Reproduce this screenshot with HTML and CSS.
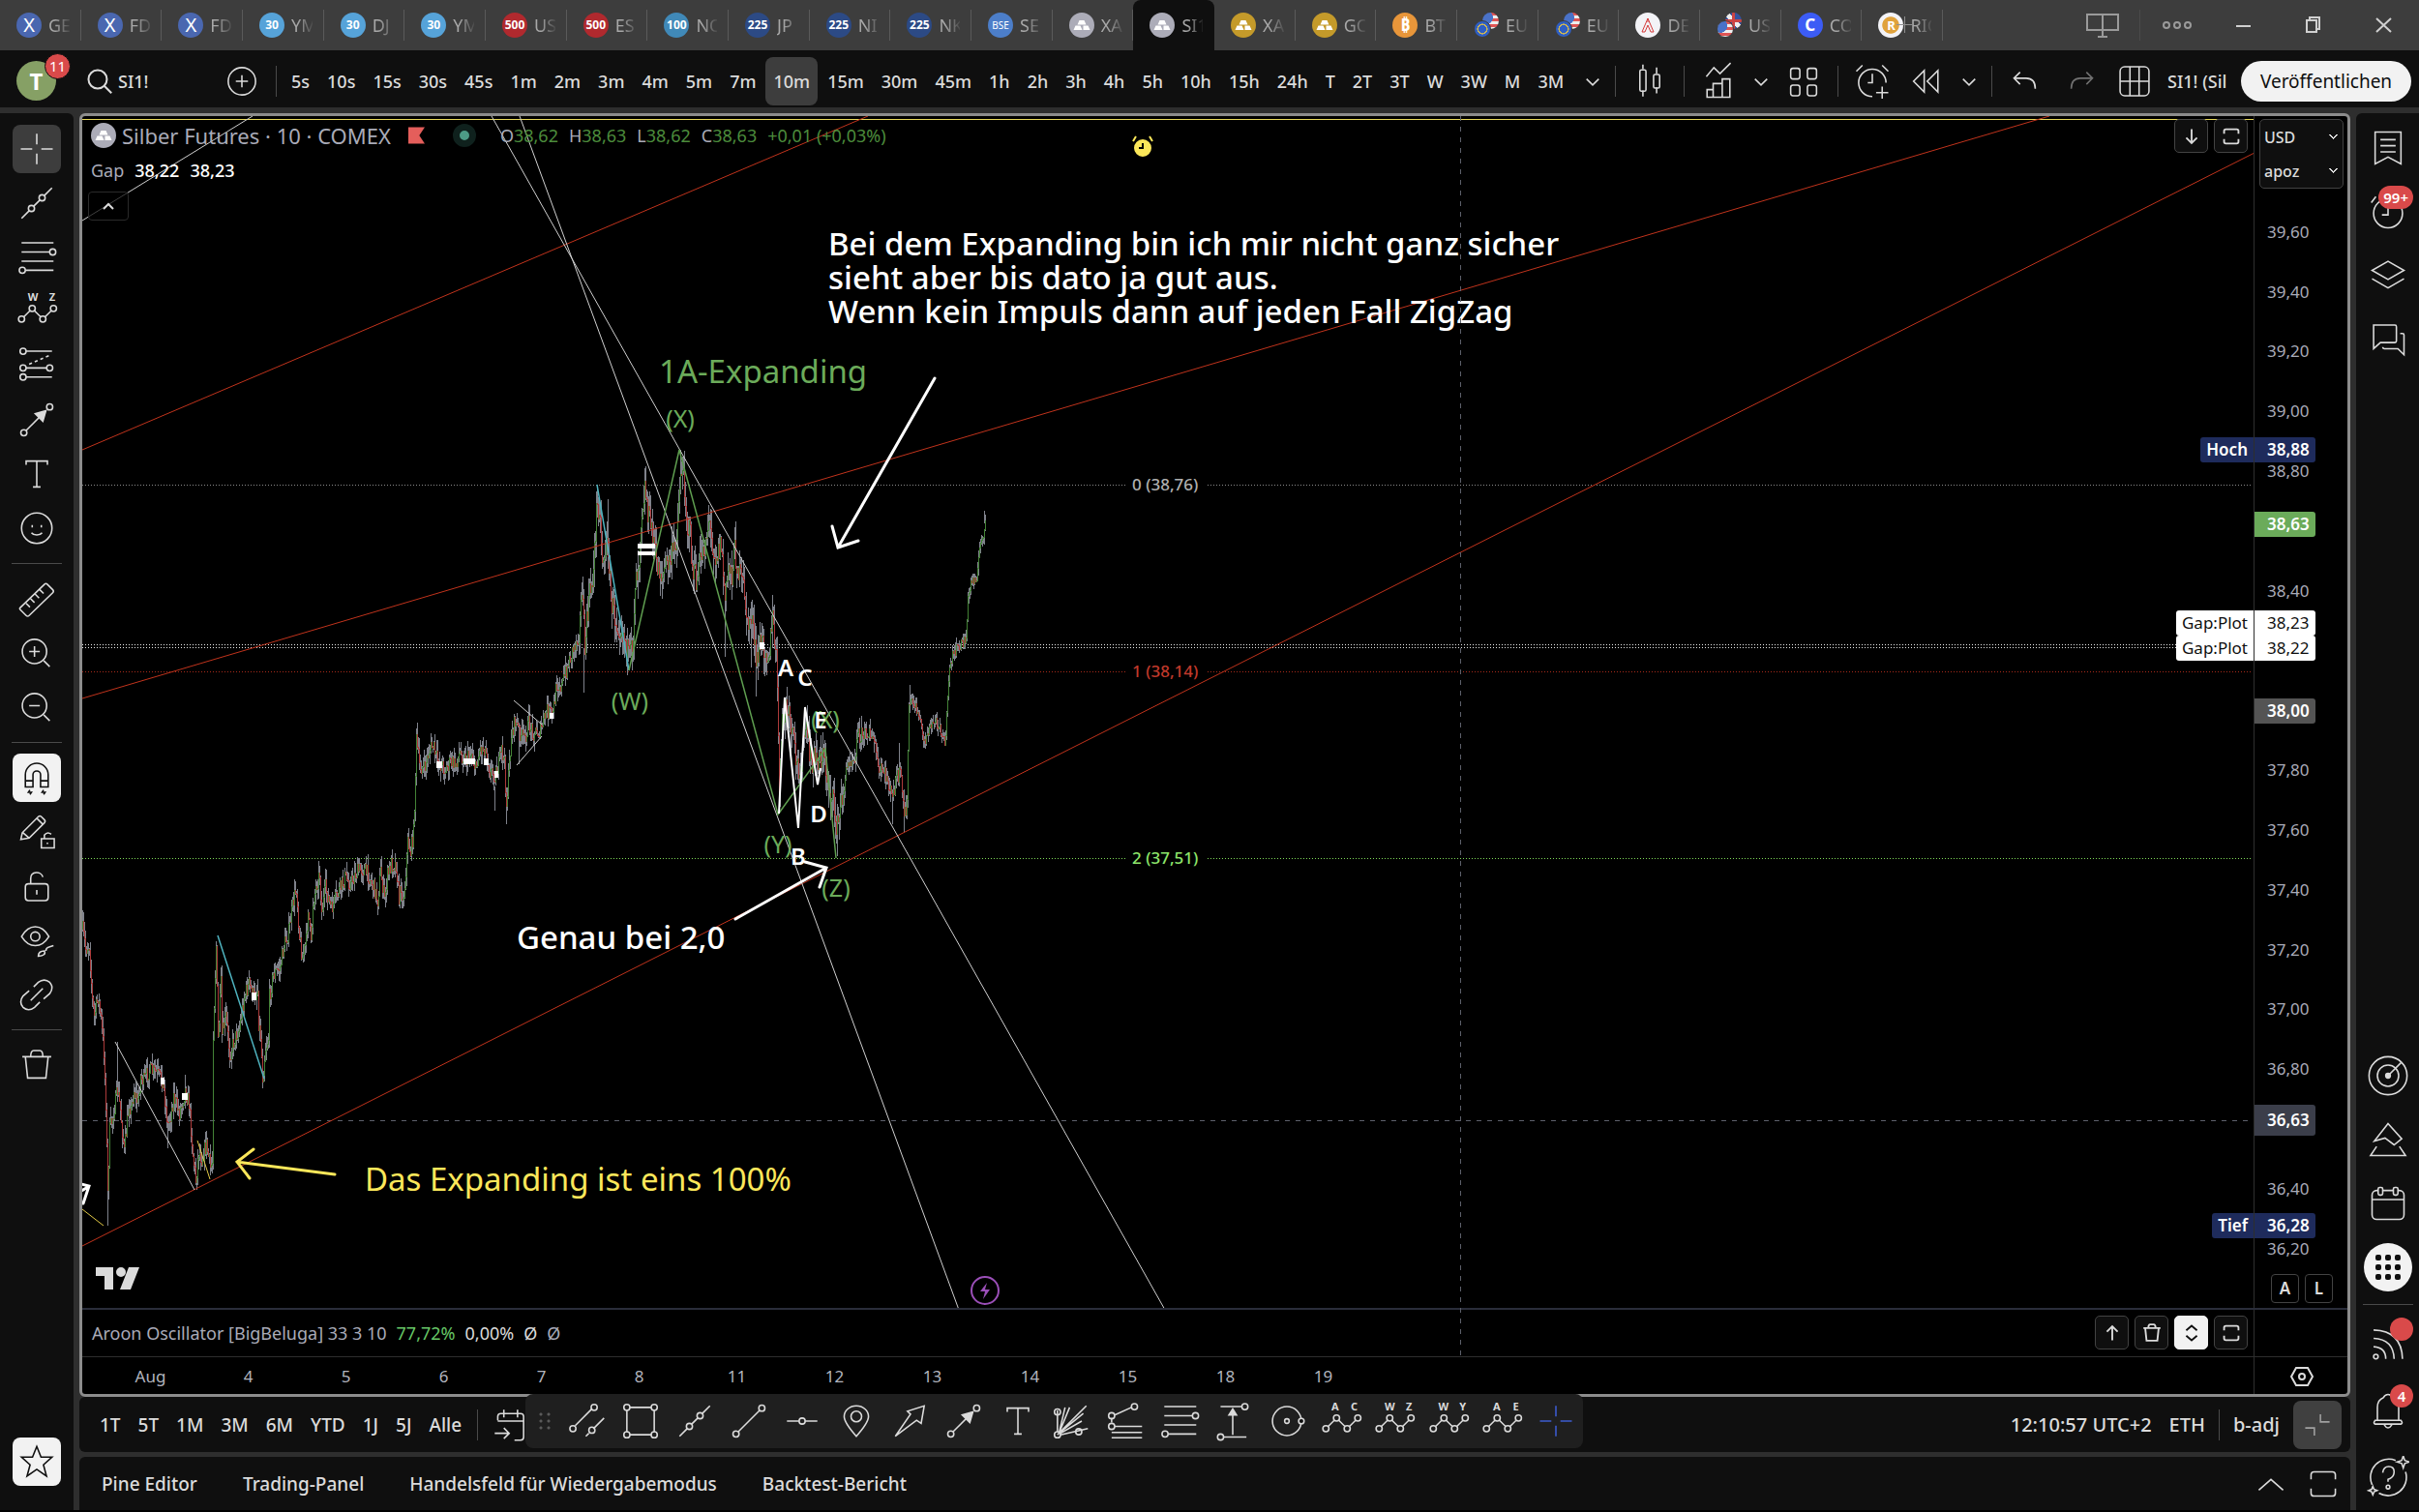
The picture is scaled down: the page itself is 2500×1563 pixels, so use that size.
FILE: index.html
```html
<!DOCTYPE html>
<html lang="de">

<head>
	<meta charset="utf-8">
	<title>SI1! Silber Futures</title>
	<link rel="stylesheet" href="styles.css">
</head>

<body>
	<!-- Icon sprite, 28 unit grid -->
	<svg class="sprite">
		<symbol id="i-cross" viewBox="0 0 28 28"><path d="M14 4v7M14 17v7M3.500 14h7.500M17 14h7.500" /></symbol>
		<symbol id="i-trend" viewBox="0 0 28 28"><path d="M4 24l5-5M12 16l4-4M19 9l5-5" /><circle cx="10.500" cy="17.500" r="2" /><circle cx="17.500" cy="10.500" r="2" /></symbol>
		<symbol id="i-fib" viewBox="0 0 28 28"><path d="M4 4.500h21M4 10.500h18.500M4 16.500h21M6.500 22.500H25" /><circle cx="24.500" cy="10.500" r="2" /><circle cx="4.500" cy="22.500" r="2" /></symbol>
		<symbol id="i-wave" viewBox="0 0 28 28"><path d="M5.500 17.500l4-4M12.500 13.500l4 4M19.500 17.500l4-4" /><circle cx="4" cy="19" r="2" /><circle cx="11" cy="12" r="2" /><circle cx="18" cy="19" r="2" /><circle cx="25" cy="12" r="2" /></symbol>
		<symbol id="i-pos" viewBox="0 0 28 28"><path d="M7 4.500h17M7 15.500h13.500M7 21.500h17" /><path d="M9 13l14-6" stroke-dasharray="2 2" /><circle cx="5" cy="4.500" r="2" /><circle cx="5" cy="15.500" r="2" /><circle cx="22.500" cy="15.500" r="2" /><circle cx="5" cy="21.500" r="2" /></symbol>
		<symbol id="i-arrow" viewBox="0 0 28 28"><path d="M7 21L20 8" /><path class="solid" d="M20 8l-7 2 5 5z" /><circle cx="5.500" cy="22.500" r="2" /><circle cx="22.500" cy="5.500" r="2" /></symbol>
		<symbol id="i-text" viewBox="0 0 28 28"><path d="M7 8V5.500h14V8M14 5.500v17M11.500 22.500h5" /></symbol>
		<symbol id="i-smile" viewBox="0 0 28 28"><circle cx="14" cy="14" r="10" /><path d="M10.500 17c1.500 2 5.500 2 7 0M11 12v1.500M17 12v1.500" /></symbol>
		<symbol id="i-ruler" viewBox="0 0 28 28"><path d="M3 20L19 4.500q1-1 2 0l3.500 3.500q1 1 0 2L9 25q-1 1-2 0l-4-4q-.5-.5 0-1zM7 17l2.500 2.500M10 14l2.500 2.500M13 11l2.500 2.500M16 8l2.500 2.500" /></symbol>
		<symbol id="i-zoomin" viewBox="0 0 28 28"><circle cx="12.500" cy="13" r="8" /><path d="M18.500 19l4 4M12.500 9.500v7M9 13h7" /></symbol>
		<symbol id="i-zoomout" viewBox="0 0 28 28"><circle cx="12.500" cy="13" r="8" /><path d="M18.500 19l4 4M9 13h7" /></symbol>
		<symbol id="i-magnet" viewBox="0 0 28 28"><path d="M6.500 20V12a7.500 7.500 0 0 1 15 0v8h-5V12a2.500 2.500 0 0 0-5 0v8zM6.500 16h5M16.500 16h5M9.500 22l-1 1.500h2l-1 1.500M18.500 22l-1 1.500h2l-1 1.500" /></symbol>
		<symbol id="i-pencil" viewBox="0 0 28 28"><path d="M3.500 19l1-4.500L15 4q1-1 2 0l2 2q1 1 0 2L9 18zM5 14.500L9 18M14 5l4 4M17 18.500h8.500v6H17zM19 18.500V16q2-2.500 4.500-.5M21 21v1" /></symbol>
		<symbol id="i-lock" viewBox="0 0 28 28"><rect x="6.500" y="12.500" width="15" height="11" rx="2" /><path d="M10 12.500V9c0-5 7-5 8-1M14 16.500v3" /></symbol>
		<symbol id="i-eye" viewBox="0 0 28 28"><path d="M4 11.500c5-8.500 13-8.500 18 0-5 8-13 8-18 0z" /><circle cx="13" cy="11.500" r="3" /><path d="M15 24.500q0-3.500 4-3.500 1.500 3-4 3.500zM20 21q0-2 2-2.500l3-1" /></symbol>
		<symbol id="i-link" viewBox="0 0 28 28"><path d="M12 9l3-3q4-3 7.500 0 3 3.500 0 7.500l-4 3.500M16 19l-3.500 3.500q-4 3-7.500 0-3-3.500 0-7.500L9 11.500M10 18l8-8" /></symbol>
		<symbol id="i-trash" viewBox="0 0 28 28"><path d="M4.500 8.500h19M6.500 8.500l1.500 14h12l1.500-14M10 8.500q0-4 2-4h4q2 0 2 4" /></symbol>
		<symbol id="i-star" viewBox="0 0 28 28"><path d="M14 4l2.800 7h7.200l-5.600 5 2 7.500-6.400-4.500-6.400 4.500 2-7.500-5.600-5h7.200z" /></symbol>
		<symbol id="i-search" viewBox="0 0 28 28"><circle cx="12.500" cy="12.500" r="7" /><path d="M17.500 17.500l5.500 5.500" /></symbol>
		<symbol id="i-plus" viewBox="0 0 28 28"><circle cx="14" cy="14" r="9" /><path d="M14 10v8M10 14h8" /></symbol>
		<symbol id="i-down" viewBox="0 0 28 28"><path d="M10 12.500l4 4 4-4" /></symbol>
		<symbol id="i-candles" viewBox="0 0 28 28"><path d="M9.500 3v3M9.500 20v4M18.500 5v4M18.500 18v4" /><rect x="7.500" y="6.500" width="4" height="14" rx="1" /><rect x="16.500" y="9.500" width="4" height="9" rx="1" /></symbol>
		<symbol id="i-indicator" viewBox="0 0 28 28"><path d="M6 11l5-6 4 4 7-7M6.500 24.500v-5h4v5zM10.500 24.500v-9h6v9zM16.500 24.500v-12h5v12zM6 24.500h16" /></symbol>
		<symbol id="i-grid" viewBox="0 0 28 28"><rect x="5.500" y="5.500" width="6" height="7" rx="1.500" /><rect x="16.500" y="5.500" width="6" height="7" rx="1.500" /><rect x="5.500" y="16.500" width="6" height="7" rx="1.500" /><rect x="16.500" y="16.500" width="6" height="7" rx="1.500" /></symbol>
		<symbol id="i-alarm" viewBox="0 0 28 28"><path d="M23 15a9 9 0 1 0-9 9M14 9v6h-3M3.500 7.500l4-4M24.500 7.500l-4-4M20.500 17.500v8M16.500 21.500h8" /></symbol>
		<symbol id="i-rewind" viewBox="0 0 28 28"><path d="M12.500 7v14L5.500 14zM21.500 7v14L14.500 14z" /></symbol>
		<symbol id="i-undo" viewBox="0 0 28 28"><path d="M10 8l-4 4 4 4M6 12h8q6 0 6 7" /></symbol>
		<symbol id="i-redo" viewBox="0 0 28 28"><path d="M18 8l4 4-4 4M22 12h-8q-6 0-6 7" /></symbol>
		<symbol id="i-layout" viewBox="0 0 28 28"><rect x="4.500" y="4.500" width="19" height="19" rx="3" /><path d="M11 4.500v19M17 4.500v19M4.500 14h19" /></symbol>
		<symbol id="i-max" viewBox="0 0 28 28"><path d="M6 11V8q0-2 2-2h12q2 0 2 2v3M6 17v3q0 2 2 2h12q2 0 2-2v-3" /></symbol>
		<symbol id="i-arrdown" viewBox="0 0 28 28"><path d="M14 6v15M8 15.500l6 6 6-6" /></symbol>
		<symbol id="i-arrup" viewBox="0 0 28 28"><path d="M14 22V7M8 12.500l6-6 6 6" /></symbol>
		<symbol id="i-updown" viewBox="0 0 28 28"><path d="M8 11l6-5 6 5M8 17l6 5 6-5" /></symbol>
		<symbol id="i-up" viewBox="0 0 28 28"><path d="M6 18l8-7 8 7" /></symbol>
		<symbol id="i-list" viewBox="0 0 28 28"><path d="M5.500 3.500h17v21L14 20l-8.500 4.500zM9 8.500h10M9 12.500h10M9 16.500h10" /></symbol>
		<symbol id="i-clock" viewBox="0 0 28 28"><circle cx="14" cy="15" r="9.500" /><path d="M14 11v5h-4M3 8l3-4" /></symbol>
		<symbol id="i-layers" viewBox="0 0 28 28"><path d="M14 4.500l10.500 6L14 16.500l-10.500-6zM3.500 16L14 22l10.500-6" /></symbol>
		<symbol id="i-chat" viewBox="0 0 28 28"><path d="M4.500 4.500h14q1 0 1 1V15q0 1-1 1H9l-4.500 4zM22 10h1.500q1 0 1 1v13l-4-4h-9q-1 0-1-1" /></symbol>
		<symbol id="i-radar" viewBox="0 0 28 28"><circle cx="14" cy="14" r="12.500" /><circle cx="14" cy="14" r="7" /><circle class="solid" cx="14" cy="14" r="1.500" /><path d="M14 14l8.500-8.500" /></symbol>
		<symbol id="i-pyramid" viewBox="0 0 28 28"><path d="M14 3.500l9 10-5 4-6-4.500-7 2zM6.500 18.500L2.500 24.500h23l-4-6" /></symbol>
		<symbol id="i-calendar" viewBox="0 0 28 28"><rect x="3.500" y="5.500" width="21" height="19" rx="3" /><path d="M3.500 11.500h21" /><rect class="cut" x="7.500" y="3.500" width="3" height="5" rx="1" /><rect class="cut" x="17.500" y="3.500" width="3" height="5" rx="1" /></symbol>
		<symbol id="i-feed" viewBox="0 0 28 28"><circle cx="6" cy="22.500" r="1.500" /><path d="M4.500 16q8 .5 8 8M4.500 10.500q13 .5 13.500 13.500M4.500 5Q23 5.500 23.500 24" /></symbol>
		<symbol id="i-bell" viewBox="0 0 28 28"><path d="M7 20V12q0-5 4-6.500 1-2 3-2t3 2q4 1.500 4 6.500v8M5.500 20.500h17q1.500 2 0 2.500h-17q-1.500-.5 0-2.500zM11.500 23.500q2.500 4 5 0" /></symbol>
		<symbol id="i-help" viewBox="0 0 28 28"><path d="M19 3A12 12 0 0 0 3.500 19M8 24.500A12 12 0 0 0 25.500 10.500M10.500 11q.5-4 4-4t3.500 3.500-4 5v1.500M24 0l1 3 3 1-3 1-1 3-1-3-3-1 3-1zM4 20l.8 2 2 .8-2 .8-.8 2-.8-2-2-.8 2-.8z" /><circle cx="14" cy="20.500" r="1.200" /></symbol>
		<symbol id="i-goto" viewBox="0 0 28 28"><path d="M6 11V8.500q0-2 2-2h13q2 0 2 2V22q0 2-2 2h-4M6 11.500h17M10 4v5M19 4v5M4 19.500h9M10 16l3.500 3.500L10 23" /></symbol>
		<symbol id="i-channel" viewBox="0 0 28 28"><path d="M6 17L17 6M13 24l2-2M18 19l7-7" /><circle cx="4.500" cy="19" r="2" /><circle cx="18.500" cy="5" r="2" /><circle cx="17" cy="20" r="2" /></symbol>
		<symbol id="i-rect" viewBox="0 0 28 28"><path d="M7 5h14M7 23h14M5 7v14M23 7v14" /><circle cx="5" cy="5" r="2" /><circle cx="23" cy="5" r="2" /><circle cx="5" cy="23" r="2" /><circle cx="23" cy="23" r="2" /></symbol>
		<symbol id="i-line" viewBox="0 0 28 28"><path d="M7 21L21 7" /><circle cx="5.500" cy="22.500" r="2" /><circle cx="22.500" cy="5.500" r="2" /></symbol>
		<symbol id="i-hline" viewBox="0 0 28 28"><path d="M4 14h8M16 14h8" /><circle cx="14" cy="14" r="2" /></symbol>
		<symbol id="i-pin" viewBox="0 0 28 28"><path d="M14 24Q6 15 6 11a8 7 0 0 1 16 0q0 4-8 13z" /><circle cx="14" cy="11" r="3.500" /></symbol>
		<symbol id="i-bigarrow" viewBox="0 0 28 28"><path d="M4 24L14 9.500l-2-2L23 4l-2 11.500-3-2z" /></symbol>
		<symbol id="i-fan" viewBox="0 0 28 28"><path d="M5 23L24 4M5 21V7M6 22l7-17M6 22l4-17M7 22l14-8M7 23l18-4M6 22L22 9" /><circle cx="5" cy="23" r="2" /><circle cx="5" cy="8" r="2" /><circle cx="19" cy="21" r="2" /></symbol>
		<symbol id="i-fibext" viewBox="0 0 28 28"><path d="M7 10l11-5M5 12v3M7 17.500h18M5 21.500h20M5 25h20" /><circle cx="20" cy="4.500" r="2" /><circle cx="5" cy="10.500" r="2" /><circle cx="5" cy="17.500" r="2" /></symbol>
		<symbol id="i-range" viewBox="0 0 28 28"><path d="M6 4.500h14M8 24.500h15M14 23V8" /><path class="solid" d="M14 6l2.500 4h-5z" /><circle cx="22" cy="4.500" r="2" /><circle cx="6" cy="24.500" r="2" /></symbol>
		<symbol id="i-circle" viewBox="0 0 28 28"><circle cx="14" cy="14" r="9.500" /><circle cx="14" cy="14" r="1.500" /><circle class="cut" cx="23.500" cy="14" r="1.800" /></symbol>
		<symbol id="i-corner" viewBox="0 0 28 28"><path d="M16 7v5h6M6 16h6v5" /></symbol>
		<symbol id="i-bars" viewBox="0 0 26 26"><path class="bar" d="M10.500 8h5l2 4.500h-9zM6.500 13.500h5l2 4.500h-9zM14.500 13.500h5l2 4.500h-7z" /></symbol>
		<symbol id="i-tower" viewBox="0 0 26 26"><path d="M13 6l-6 14M13 6l6 14M7 20h3l3-7 3 7h3M13 6v4" /></symbol>
	</svg>

	<header class="tabs">
		<nav class="tab-list" id="tabs"></nav>
		<button class="new-tab" aria-label="Neuer Tab"></button>
		<div class="window-controls">
			<button aria-label="Monitor"><svg viewBox="0 0 40 28"><path d="M4 3h32v16H4zM20 3v23M15 26h10" /></svg></button>
			<i class="divider"></i>
			<button aria-label="Menü"><svg viewBox="0 0 40 28"><circle cx="9" cy="14" r="3" /><circle cx="20" cy="14" r="3" /><circle cx="31" cy="14" r="3" /></svg></button>
			<button class="win" aria-label="Minimieren"><svg viewBox="0 0 40 28"><path d="M13 15h15" /></svg></button>
			<button class="win" aria-label="Verkleinern"><svg viewBox="0 0 40 28"><path d="M13 9h10v12H13zM16 9V6h10v12h-3" /></svg></button>
			<button class="win" aria-label="Schließen"><svg viewBox="0 0 40 28"><path d="M12 7l15 14M27 7L12 21" /></svg></button>
		</div>
	</header>

	<div class="toolbar">
		<button class="avatar" aria-label="Profil">T<span class="badge">11</span></button>
		<button class="symbol"><svg class="icon"><use href="#i-search" /></svg>SI1!</button>
		<button class="icon-btn add" aria-label="Vergleichen"><svg class="icon"><use href="#i-plus" /></svg></button>
		<i class="divider"></i>
		<div class="intervals" id="intervals"></div>
		<div class="tools">
			<button class="chev" aria-label="Intervalle"><svg class="icon"><use href="#i-down" /></svg></button>
			<i class="divider"></i>
			<button class="icon-btn" aria-label="Kerzen"><svg class="icon"><use href="#i-candles" /></svg></button>
			<i class="divider"></i>
			<button class="icon-btn" aria-label="Indikatoren"><svg class="icon"><use href="#i-indicator" /></svg></button>
			<button class="chev" aria-label="Favoriten"><svg class="icon"><use href="#i-down" /></svg></button>
			<button class="icon-btn" aria-label="Vorlagen"><svg class="icon"><use href="#i-grid" /></svg></button>
			<i class="divider"></i>
			<button class="icon-btn" aria-label="Alarm"><svg class="icon"><use href="#i-alarm" /></svg></button>
			<button class="icon-btn" aria-label="Replay"><svg class="icon"><use href="#i-rewind" /></svg></button>
			<button class="chev" aria-label="Mehr"><svg class="icon"><use href="#i-down" /></svg></button>
			<i class="divider"></i>
			<button class="icon-btn" aria-label="Rückgängig"><svg class="icon"><use href="#i-undo" /></svg></button>
			<button class="icon-btn dim" aria-label="Wiederholen"><svg class="icon"><use href="#i-redo" /></svg></button>
			<button class="icon-btn" aria-label="Layout"><svg class="icon"><use href="#i-layout" /></svg></button>
			<button class="layout-name">SI1! (Sil</button>
			<button class="publish">Veröffentlichen</button>
		</div>
	</div>

	<div class="workspace">
		<aside class="sidebar" id="drawtools"></aside>

		<main class="main">
			<section class="chart">
				<div class="price-pane">
					<div class="plot">
						<svg class="plot-svg" id="plot">
							<g transform="translate(-85 -120)">
								<path class="alert-line" d="M85 123.500H2330" />
								<g class="levels">
									<path stroke="#8a8a8a" d="M85 501.500H1164M1248 501.500H2328" />
									<path stroke="#e8e8e8" d="M85 666.500H2328M85 669.500H2328" />
									<path stroke="#a8291a" d="M85 694.500H1164M1248 694.500H2328" />
									<path stroke="#7ed957" d="M85 887.500H1164M1248 887.500H2328" />
								</g>
								<path class="cross" d="M85 1158.500H2330" />
								<g id="candles"></g>
								<g class="rays">
									<path d="M85 465L897 120M85 722L2118 120M85 1288L2330 158" />
								</g>
								<g class="trend">
									<path d="M85 228L261 120M508 120L1204 1354M537 120L991 1354M119 1077L201 1230M531 724L560 749M534 791L560 761" />
								</g>
								<path class="cyan" d="M617 501L650 693M225 967L273 1115" />
								<path class="green" d="M650 693L702 465L804 842L853 774L864 887" />
								<path class="white-zig" d="M805 841L811 721L825 856L832 731L845 811L848 794" />
								<path class="yellow" d="M85 1250L107 1267M204 1179L217 1219" />
								<path class="arrow" d="M966 391L866 566M860 544L866 566L887 559M760 950L854 897M832 891L854 897L847 917M84 1224L92 1226L86 1244M84 1231L91 1227" />
								<path class="arrow yellow-arrow" d="M346 1214L245 1201M262 1188L245 1201L258 1218" />
								<path class="gap-box" d="M659 562h18v5h-18zM659 570h18v4h-18zM260 1026h5v8h-5zM166 1114h4v7h-4zM188 1130h6v7h-6zM568 737h4v6h-4zM785 664h5v7h-5zM451 787h6v7h-6zM479 784h12v6h-12zM500 784h5v7h-5zM511 797h4v7h-4z" />
								<g class="level-text">
									<text x="1170" y="507" fill="#b0b0b0">0 (38,76)</text>
									<text x="1170" y="700" fill="#c0392b">1 (38,14)</text>
									<text x="1170" y="893" fill="#8ee66b">2 (37,51)</text>
								</g>
								<g class="wave-green">
									<text x="703" y="442">(X)</text>
									<text x="651" y="734">(W)</text>
									<text x="853" y="753">(X)</text>
									<text x="804" y="882">(Y)</text>
									<text x="864" y="927">(Z)</text>
								</g>
								<g class="wave-white">
									<text x="812" y="699">A</text>
									<text x="832" y="709">C</text>
									<text x="848" y="753">E</text>
									<text x="846" y="850">D</text>
									<text x="825" y="894">B</text>
								</g>
								<g class="note">
									<text x="856" y="264">Bei dem Expanding bin ich mir nicht ganz sicher</text>
									<text x="856" y="299">sieht aber bis dato ja gut aus.</text>
									<text x="856" y="334">Wenn kein Impuls dann auf jeden Fall ZigZag</text>
									<text x="534" y="981">Genau bei 2,0</text>
									<text class="green-note" x="681" y="396">1A-Expanding</text>
									<text class="yellow-note" x="377" y="1231">Das Expanding ist eins 100%</text>
								</g>
								<g class="alarm-mark">
									<circle cx="1181" cy="153" r="8" />
									<path d="M1171 146l3-5M1191 146l-3-5" />
									<path class="hand" d="M1181 148v5h-4" />
								</g>
								<g class="bolt">
									<circle cx="1018" cy="1334" r="14" />
									<path d="M1020 1326l-7 9h5l-2 8 7-10h-5z" />
								</g>
								<path class="tv-logo" d="M99 1310h18v23h-9v-14h-9zM120 1315a5 5 0 1 0 10 0 5 5 0 1 0-10 0M133 1310h11l-9 23h-11z" />
							</g>
						</svg>
						<div class="legend">
							<div class="legend-row title">
								<span class="coin silver"><svg><use href="#i-bars" /></svg></span>
								<span>Silber Futures · 10 · COMEX</span>
								<svg class="flag" viewBox="0 0 18 18"><path d="M0 0h18l-6 9 6 9H0z" /></svg>
								<span class="status"></span>
								<span class="ohlc">
									<span>O<b>38,62</b></span><span>H<b>38,63</b></span><span>L<b>38,62</b></span><span>C<b>38,63</b></span><span><b>+0,01 (+0,03%)</b></span>
								</span>
							</div>
							<div class="legend-row gap"><span>Gap</span><span class="val">38,22</span><span class="val">38,23</span></div>
							<button class="collapse" aria-label="Einklappen"><svg viewBox="0 0 16 10"><path d="M3 8l5-5 5 5" /></svg></button>
						</div>
						<div class="pane-buttons">
							<button aria-label="Nach unten"><svg><use href="#i-arrdown" /></svg></button>
							<button aria-label="Maximieren"><svg><use href="#i-max" /></svg></button>
						</div>
						<div id="tags"></div>
					</div>
					<div class="price-axis" id="axis">
						<div class="units">
							<select aria-label="Währung"><option>USD</option></select>
							<select aria-label="Einheit"><option>apoz</option></select>
						</div>
						<div class="scale-buttons"><button>A</button><button>L</button></div>
					</div>
				</div>
				<div class="indicator-pane">
					<div class="indicator">
						<span>Aroon Oscillator [BigBeluga] 33 3 10</span>
						<span class="up">77,72%</span>
						<span class="zero">0,00%</span>
						<span class="zero">Ø</span>
						<span class="zero dimmer">Ø</span>
						<div class="pane-buttons">
							<button aria-label="Nach oben"><svg><use href="#i-arrup" /></svg></button>
							<button aria-label="Entfernen"><svg><use href="#i-trash" /></svg></button>
							<button class="on" aria-label="Ausklappen"><svg><use href="#i-updown" /></svg></button>
							<button aria-label="Maximieren"><svg><use href="#i-max" /></svg></button>
						</div>
					</div>
					<div class="axis-cell"></div>
				</div>
				<div class="time-axis">
					<div class="days" id="days"></div>
					<div class="axis-cell">
						<button class="gear" aria-label="Einstellungen"><svg viewBox="0 0 24 24"><path d="M6 3h12l5 9-5 9H6l-5-9z" /><circle cx="12" cy="12" r="3" /></svg></button>
					</div>
				</div>
				<div class="cross-v"></div>
			</section>

			<section class="range-bar">
				<div class="ranges" id="ranges"></div>
				<i class="divider"></i>
				<button class="icon-btn" aria-label="Gehe zu"><svg class="icon"><use href="#i-goto" /></svg></button>
				<div class="session">
					<button>12:10:57 UTC+2</button>
					<button>ETH</button>
					<i class="divider"></i>
					<button>b-adj</button>
					<button class="square" aria-label="Vollbild"><svg class="icon"><use href="#i-corner" /></svg></button>
				</div>
				<div class="floating" id="floating"><span class="grip"></span></div>
			</section>

			<section class="panels">
				<button>Pine Editor</button>
				<button>Trading-Panel</button>
				<button>Handelsfeld für Wiedergabemodus</button>
				<button>Backtest-Bericht</button>
				<div class="panel-tools">
					<button aria-label="Öffnen"><svg class="icon"><use href="#i-up" /></svg></button>
					<button aria-label="Maximieren"><svg class="icon"><use href="#i-max" /></svg></button>
				</div>
			</section>
		</main>

		<aside class="widgets">
			<button aria-label="Watchlist"><svg class="icon"><use href="#i-list" /></svg></button>
			<button aria-label="Alarme"><svg class="icon"><use href="#i-clock" /></svg><span class="badge wide">99+</span></button>
			<button aria-label="Objekte"><svg class="icon"><use href="#i-layers" /></svg></button>
			<button aria-label="Chats"><svg class="icon"><use href="#i-chat" /></svg></button>
			<span class="grow"></span>
			<button aria-label="Screener"><svg class="icon"><use href="#i-radar" /></svg></button>
			<button aria-label="Pine"><svg class="icon"><use href="#i-pyramid" /></svg></button>
			<button aria-label="Kalender"><svg class="icon"><use href="#i-calendar" /></svg></button>
			<button aria-label="Produkte"><span class="apps"><i></i><i></i><i></i><i></i><i></i><i></i><i></i><i></i><i></i></span></button>
			<hr>
			<button class="tall" aria-label="Feed"><svg class="icon"><use href="#i-feed" /></svg><span class="badge"></span></button>
			<button class="tall" aria-label="Mitteilungen"><svg class="icon"><use href="#i-bell" /></svg><span class="badge">4</span></button>
			<button class="tall" aria-label="Hilfe"><svg class="icon"><use href="#i-help" /></svg></button>
		</aside>
	</div>
	<script src="script.js"></script>
</body>

</html>
```
FILE: styles.css
```css
* {
	box-sizing: border-box;
}

body {
	margin: 0;
	height: 100vh;
	padding-bottom: 2px;
	display: flex;
	flex-direction: column;
	overflow: hidden;
	background: #000;
	color: #dbdbdb;
	font-family: "Noto Sans", "Open Sans", sans-serif;
	font-size: 18px;
	line-height: 24px;
}

button,
select {
	margin: 0;
	padding: 0;
	border: 0;
	background: none;
	color: inherit;
	font: inherit;
	white-space: nowrap;
}

svg {
	fill: none;
	stroke: currentColor;
	display: block;
}

svg text {
	stroke: none;
}

.sprite {
	position: absolute;
	width: 0;
	height: 0;
}

.icon {
	width: 44px;
	height: 44px;
	flex: none;
}

.solid {
	fill: currentColor;
}

.cut {
	fill: #0f0f0f;
}

.bar {
	fill: #fff;
	stroke: none;
}

.divider {
	flex: none;
	width: 1px;
	height: 32px;
	margin: 0 7px;
	background: #4a4a4a;
}

.badge {
	position: absolute;
	min-width: 24px;
	height: 24px;
	padding: 0 4px;
	border-radius: 12px;
	background: #d94a4a;
	color: #fff;
	font-size: 15px;
	font-weight: 600;
	line-height: 24px;
	text-align: center;
}

/* Symbol tabs */
.tabs {
	flex: none;
	display: flex;
	position: relative;
	height: 52px;
	background: #3d3d3d;
}

.tab-list {
	flex: 1;
	display: flex;
}

.tab {
	flex: 1 1 0;
	min-width: 0;
	display: flex;
	align-items: center;
	gap: 7px;
	padding-left: 17px;
	position: relative;
	color: #a8a8a8;
	text-align: left;
}

.tab::after {
	content: "";
	position: absolute;
	right: 0;
	top: 10px;
	width: 1px;
	height: 32px;
	background: #5a5a5a;
}

.tab.active {
	background: #0f0f0f;
	border-radius: 8px 8px 0 0;
}

.tab.active::after {
	display: none;
}

.tab-name {
	width: 22px;
	overflow: hidden;
	-webkit-mask-image: linear-gradient(90deg, #000 30%, transparent 110%);
	mask-image: linear-gradient(90deg, #000 30%, transparent 110%);
}

.coin {
	flex: none;
	width: 26px;
	height: 26px;
	border-radius: 50%;
	background: #4a67b0;
	color: #fff;
	font-size: 12px;
	font-weight: 700;
	line-height: 26px;
	text-align: center;
}

.coin svg {
	width: 26px;
	height: 26px;
}

.coin.x { font-size: 20px; font-weight: 400; }
.coin.dow { background: #56a3d9; }
.coin.spx { background: #b0292e; }
.coin.ndx { background: #4089b8; }
.coin.nik { background: #2c4a85; }
.coin.bse { background: #4c7ec9; font-size: 10px; font-weight: 400; }
.coin.silver { background: #acacb8; }
.coin.gold { background: #c49a2a; }
.coin.btc { background: #e8963a; font-size: 17px; }
.coin.dax { background: #f3f3f7; color: #d43a3a; }
.coin.coinbase { background: #3c5cf5; font-size: 17px; }
.coin.rig { background: radial-gradient(circle, #e0a23c 45%, #f3f3f7 50%); font-size: 13px; }

.pair {
	flex: none;
	position: relative;
	width: 26px;
	height: 26px;
}

.pair i {
	position: absolute;
	right: 0;
	top: 0;
	width: 17px;
	height: 17px;
	border-radius: 50%;
	background: radial-gradient(circle at 20% 30%, #4a72c8 40%, transparent 42%), repeating-linear-gradient(#e05555 0 3px, #eee 3px 6px);
}

.pair i + i {
	left: 0;
	top: auto;
	bottom: 0;
	width: 18px;
	height: 18px;
	border: 1px solid #3d3d3d;
	background: radial-gradient(circle, #2f5fc4 35%, #cdb555 37% 48%, #2f5fc4 50%);
}

.pair.gb i {
	background: linear-gradient(#c44 0 0) center / 100% 3px no-repeat, linear-gradient(#c44 0 0) center / 3px 100% no-repeat, linear-gradient(45deg, #35539f 40%, #eee 41% 59%, #35539f 60%);
}

.pair.gb i + i {
	background: radial-gradient(circle at 20% 30%, #4a72c8 40%, transparent 42%), repeating-linear-gradient(#e05555 0 3px, #eee 3px 6px);
}

.new-tab {
	position: absolute;
	left: 1960px;
	top: 17px;
	width: 17px;
	height: 17px;
	background: linear-gradient(#8f8f8f 0 0) center / 100% 1px no-repeat, linear-gradient(#8f8f8f 0 0) center / 1px 100% no-repeat;
}

.window-controls {
	flex: none;
	width: 492px;
	display: flex;
	align-items: center;
	justify-content: flex-end;
	color: #9a9a9a;
}

.window-controls svg {
	width: 40px;
	height: 28px;
	stroke-width: 2;
}

.window-controls button {
	width: 62px;
	display: flex;
	justify-content: center;
}

.window-controls .win {
	width: 73px;
	color: #d0d0d0;
}

/* Top toolbar */
.toolbar {
	flex: none;
	height: 59px;
	display: flex;
	align-items: center;
	padding: 4px 8px 0 17px;
	background: #0f0f0f;
	white-space: nowrap;
}

.avatar {
	position: relative;
	width: 41px;
	height: 41px;
	border-radius: 50%;
	background: #86a065;
	color: #fff;
	font-size: 24px;
	font-weight: 700;
}

.avatar .badge {
	top: -8px;
	right: -15px;
	width: 27px;
	height: 27px;
	padding: 0;
	border: 1px solid #0f0f0f;
	border-radius: 50%;
	font-weight: 400;
}

.symbol {
	display: flex;
	align-items: center;
	width: 164px;
	margin-left: 26px;
	font-weight: 500;
}

.symbol .icon {
	width: 38px;
	height: 38px;
	stroke-width: 1.5;
}

.icon-btn,
.chev {
	flex: none;
	width: 56px;
	display: flex;
	align-items: center;
	justify-content: center;
}

.chev {
	width: 32px;
}

.dim {
	color: #707070;
}

.icon-btn.add {
	margin-left: -26px;
}

.intervals {
	display: flex;
	gap: 2px;
}

.intervals button {
	height: 50px;
	padding: 0 8px;
	border-radius: 8px;
	font-weight: 500;
}

.intervals .active {
	background: #3d3d3d;
}

.tools {
	display: flex;
	align-items: center;
	margin-left: auto;
}

.layout-name {
	width: 70px;
	margin: 0 6px 0 6px;
	overflow: hidden;
	text-align: left;
	font-weight: 500;
}

.publish {
	width: 176px;
	height: 42px;
	border-radius: 21px;
	background: #f2f2f2;
	color: #0f0f0f;
	font-size: 19px;
}

/* Workspace */
.workspace {
	flex: 1;
	min-height: 0;
	display: flex;
	gap: 6px;
	padding-top: 6px;
	background: #2e2e2e;
}

.sidebar {
	flex: none;
	width: 76px;
	display: flex;
	flex-direction: column;
	align-items: center;
	gap: 6px;
	padding: 12px 0 25px;
	background: #0f0f0f;
	border-radius: 0 6px 0 0;
}

.sidebar button {
	position: relative;
	width: 50px;
	height: 50px;
	border-radius: 8px;
	display: flex;
	align-items: center;
	justify-content: center;
}

.sidebar .active {
	background: #3d3d3d;
}

.sidebar .on {
	background: #f2f2f2;
	color: #0f0f0f;
}

.sidebar .fav {
	margin-top: auto;
}

.sidebar hr,
.widgets hr {
	width: 52px;
	height: 1px;
	margin: 5px 0;
	border: 0;
	background: #4a4a4a;
}

.letters {
	position: absolute;
	top: 3px;
	left: 10px;
	right: 0;
	display: flex;
	justify-content: space-around;
	font-size: 11px;
	font-weight: 700;
	line-height: 14px;
}

.main {
	flex: 1;
	min-width: 0;
	display: flex;
	flex-direction: column;
}

.chart {
	flex: 1;
	min-height: 0;
	position: relative;
	display: flex;
	flex-direction: column;
	border: 3px solid #8c8c8c;
	border-radius: 6px;
	background: #000;
	overflow: hidden;
}

.price-pane {
	flex: 1;
	min-height: 0;
	display: flex;
	border-bottom: 2px solid #2a2d3a;
}

.plot {
	flex: 1;
	min-width: 0;
	position: relative;
}

.plot-svg {
	position: absolute;
	inset: 0;
	width: 100%;
	height: 100%;
}

.alert-line { stroke: #e8d95a; }
.levels { stroke-dasharray: 1 2; }
.cross { stroke: #5d606b; stroke-dasharray: 5 6; }
.rays { stroke: #c0331c; }
.trend { stroke: #d0d0d0; }
.cyan { stroke: #4fb3bf; stroke-width: 1.5; }
.green { stroke: #5f9e50; stroke-width: 1.5; }
.white-zig { stroke: #fff; stroke-width: 2; }
.yellow { stroke: #e0c845; }
.arrow { stroke: #fff; stroke-width: 3; stroke-linecap: round; }
.yellow-arrow { stroke: #fbe75a; }
.gap-box { fill: #fff; stroke: none; }
.wick { stroke: #7f828b; }
.rise { stroke: #438236; }
.fall { stroke: #ad3a3a; }

.level-text {
	font-size: 17px;
	font-weight: 500;
}

.wave-green,
.wave-white {
	font-size: 25px;
	text-anchor: middle;
	fill: #6bab5a;
}

.wave-white {
	font-size: 24px;
	font-weight: 600;
	fill: #fff;
}

.note {
	font-size: 33px;
	font-weight: 500;
	fill: #fff;
}

.green-note { fill: #6bab5a; font-weight: 400; }
.yellow-note { fill: #fbe75a; font-weight: 400; }

.alarm-mark { fill: #fbe75a; stroke: #fbe75a; stroke-width: 2; }
.alarm-mark .hand { fill: none; stroke: #000; }
.bolt { stroke: #9b4fb8; stroke-width: 2; }
.bolt path { fill: #9b4fb8; stroke: none; }
.tv-logo { fill: #dbdbdb; stroke: none; }

.legend {
	position: absolute;
	left: 9px;
	top: 6px;
	color: #a9abb8;
}

.legend-row {
	display: flex;
	align-items: center;
}

.legend .title {
	height: 28px;
	font-size: 22px;
	gap: 6px;
}

.flag {
	width: 17px;
	height: 18px;
	margin-left: 12px;
	fill: #e45e5b;
	stroke: none;
}

.status {
	width: 24px;
	height: 24px;
	margin-left: 23px;
	border: 7px solid #0f211d;
	border-radius: 50%;
	background: #4d9b86;
}

.ohlc {
	display: flex;
	gap: 11px;
	margin-left: 19px;
	font-size: 18px;
}

.ohlc b {
	color: #4c8c3c;
	font-weight: 400;
}

.legend .gap {
	height: 44px;
	gap: 11px;
}

.gap .val {
	color: #fff;
	font-weight: 500;
}

.collapse {
	width: 42px;
	height: 30px;
	margin-left: -3px;
	border: 1px solid #2a2a2a;
	border-radius: 4px;
	background: rgba(0, 0, 0, 0.7);
	color: #dbdbdb;
	display: flex;
	align-items: center;
	justify-content: center;
}

.collapse svg {
	width: 16px;
	height: 10px;
	stroke-width: 2;
}

.pane-buttons {
	position: absolute;
	top: 3px;
	right: 6px;
	display: flex;
	gap: 6px;
}

.pane-buttons button {
	width: 35px;
	height: 35px;
	border: 1px solid #434343;
	border-radius: 5px;
	background: #0f0f0f;
	display: flex;
	align-items: center;
	justify-content: center;
}

.pane-buttons .on {
	border-color: #f2f2f2;
	background: #f2f2f2;
	color: #0f0f0f;
}

.pane-buttons svg {
	width: 26px;
	height: 26px;
	stroke-width: 2;
}

.price-axis,
.axis-cell {
	flex: none;
	position: relative;
	width: 97px;
	border-left: 1px solid #2e2e2e;
}

.price {
	position: absolute;
	left: 0;
	width: 63px;
	height: 26px;
	padding-left: 13px;
	border-radius: 0 3px 3px 0;
	color: #a9abb8;
	font-size: 17px;
	line-height: 26px;
	transform: translateY(-50%);
}

.price.navy,
.name.navy { background: #1e2b5c; color: #fff; font-weight: 600; }
.price.last { background: #6bab5a; color: #fff; font-weight: 600; }
.price.plot-tag,
.name.plot-tag { background: #fff; color: #0f0f0f; }
.price.grey { background: #545454; color: #fff; font-weight: 600; }
.price.pointer { height: 32px; background: #3b3e4a; color: #fff; font-weight: 600; line-height: 32px; }

.name {
	position: absolute;
	right: 0;
	height: 26px;
	padding: 0 6px;
	border-radius: 3px 0 0 3px;
	font-size: 17px;
	line-height: 26px;
	transform: translateY(-50%);
}

.units {
	position: absolute;
	left: 5px;
	top: 3px;
	width: 87px;
	height: 72px;
	border: 1px solid #434343;
	border-radius: 5px;
	background: #0f0f0f;
	z-index: 1;
}

.units select {
	display: block;
	appearance: none;
	width: 100%;
	height: 35px;
	padding-left: 4px;
	background: linear-gradient(45deg, transparent 46%, #dbdbdb 47% 60%, transparent 61%) 71px 15px / 5px 5px no-repeat, linear-gradient(-45deg, transparent 46%, #dbdbdb 47% 60%, transparent 61%) 75px 15px / 5px 5px no-repeat;
	font-size: 16px;
	font-weight: 500;
}

.scale-buttons {
	position: absolute;
	right: 15px;
	bottom: 5px;
	display: flex;
	gap: 6px;
}

.scale-buttons button {
	width: 29px;
	height: 30px;
	border: 1px solid #434343;
	border-radius: 4px;
	font-size: 17px;
	font-weight: 600;
	line-height: 28px;
}

.indicator-pane {
	flex: none;
	height: 49px;
	display: flex;
	border-bottom: 1px solid #2e2e2e;
}

.indicator {
	flex: 1;
	position: relative;
	display: flex;
	align-items: center;
	gap: 10px;
	padding-left: 10px;
	color: #a9abb8;
}

.indicator .pane-buttons {
	top: 6px;
	color: #dbdbdb;
}

.up { color: #67c767; }
.zero { color: #dbdbdb; }
.dimmer { color: #a9abb8; }

.time-axis {
	flex: none;
	height: 38px;
	display: flex;
}

.days {
	flex: 1;
	display: flex;
	padding-left: 20px;
	font-size: 17px;
	line-height: 40px;
	color: #b2b5be;
}

.days span {
	width: 101px;
	text-align: center;
}

.gear {
	display: block;
	margin: 8px 0 0 37px;
}

.gear svg {
	width: 24px;
	height: 24px;
	stroke-width: 2;
}

.cross-v {
	position: absolute;
	left: 1424px;
	top: 0;
	bottom: 38px;
	width: 1px;
	background: repeating-linear-gradient(#5d606b 0 5px, transparent 5px 11px);
}

/* Range bar with the floating favourites toolbar */
.range-bar {
	flex: none;
	position: relative;
	height: 57px;
	display: flex;
	align-items: center;
	padding: 0 9px 0 12px;
	border-radius: 6px;
	background: #0f0f0f;
	font-size: 19px;
	font-weight: 500;
}

.ranges {
	display: flex;
}

.ranges button {
	padding: 0 9px;
}

.range-bar > .icon-btn {
	width: 52px;
}

.session {
	display: flex;
	align-items: center;
	gap: 10px;
	margin-left: auto;
}

.session button {
	padding: 0 4px;
	font-size: 20px;
}

.session .divider {
	margin: 0;
}

.session .square {
	width: 50px;
	height: 50px;
	border-radius: 8px;
	padding: 3px;
	background: #404040;
	color: #a0a0a0;
}

.floating {
	position: absolute;
	left: 461px;
	top: -3px;
	width: 1093px;
	height: 56px;
	display: flex;
	align-items: center;
	border-radius: 8px;
	background: #1f1f1f;
}

.floating button {
	position: relative;
	flex: 1 1 0;
	height: 50px;
	display: flex;
	align-items: center;
	justify-content: center;
}

.floating .letters {
	left: 12px;
	right: 4px;
}

.floating .cut {
	fill: #1f1f1f;
}

.floating .blue {
	color: #3c5cd0;
}

.grip {
	width: 36px;
	height: 22px;
	background: radial-gradient(circle, #5a5a5a 1px, transparent 2px) 12px 0 / 8px 8px no-repeat, radial-gradient(circle, #5a5a5a 1px, transparent 2px) 20px 0 / 8px 8px no-repeat, radial-gradient(circle, #5a5a5a 1px, transparent 2px) 12px 7px / 8px 8px no-repeat, radial-gradient(circle, #5a5a5a 1px, transparent 2px) 20px 7px / 8px 8px no-repeat, radial-gradient(circle, #5a5a5a 1px, transparent 2px) 12px 14px / 8px 8px no-repeat, radial-gradient(circle, #5a5a5a 1px, transparent 2px) 20px 14px / 8px 8px no-repeat;
}

.panels {
	flex: none;
	height: 55px;
	margin-top: 5px;
	display: flex;
	align-items: center;
	gap: 47px;
	padding: 0 6px 0 23px;
	border-radius: 6px 6px 0 0;
	background: #0f0f0f;
	font-size: 19px;
	font-weight: 500;
}

.panel-tools {
	display: flex;
	gap: 10px;
	margin-left: auto;
}

/* Right hand widgets */
.widgets {
	flex: none;
	width: 65px;
	display: flex;
	flex-direction: column;
	align-items: center;
	padding: 3px 0 0;
	border-radius: 6px 0 0 0;
	background: #0f0f0f;
}

.widgets button {
	position: relative;
	width: 65px;
	height: 66px;
	display: flex;
	align-items: center;
	justify-content: center;
}

.widgets .tall {
	height: 69px;
}

.widgets .badge {
	right: 6px;
	top: 8px;
}

.widgets .wide {
	right: 6px;
	top: 6px;
	padding: 0 5px;
}

.grow {
	flex: 1;
}

.apps {
	width: 50px;
	height: 50px;
	padding: 11px;
	display: grid;
	grid-template-columns: repeat(3, 6px);
	gap: 4px;
	place-content: center;
	border-radius: 50%;
	background: #f2f2f2;
}

.apps i {
	height: 6px;
	border-radius: 2px;
	background: #0f0f0f;
}
```
FILE: script.js
```js
var NS = "http://www.w3.org/2000/svg";

function icon(id) {
	return '<svg class="icon"><use href="#i-' + id + '"/></svg>';
}

// Symbol tabs: [coin class, coin text, name]
var tabs = [
	["x", "X", "GE"], ["x", "X", "FD"], ["x", "X", "FD"], ["dow", "30", "YM"], ["dow", "30", "DJ"], ["dow", "30", "YM"],
	["spx", "500", "US"], ["spx", "500", "ES"], ["ndx", "100", "NQ"], ["nik", "225", "JP"], ["nik", "225", "NI"], ["nik", "225", "NK"],
	["bse", "BSE", "SE"], ["silver", "", "XA"], ["silver", "", "SI1"], ["gold", "", "XA"], ["gold", "", "GC"], ["btc", "₿", "BT"],
	["pair", "", "EU"], ["pair", "", "EU"], ["dax", "", "DE"], ["pair gb", "", "US"], ["coinbase", "C", "CO"], ["rig", "R", "RIC"]
];
var coinIcons = { silver: "bars", gold: "bars", dax: "tower" };
document.getElementById("tabs").innerHTML = tabs.map(function (t, i) {
	var mark;
	if (t[0].indexOf("pair") === 0) {
		mark = '<span class="' + t[0] + '"><i></i><i></i></span>';
	} else if (coinIcons[t[0]]) {
		mark = '<span class="coin ' + t[0] + '"><svg><use href="#i-' + coinIcons[t[0]] + '"/></svg></span>';
	} else {
		mark = '<span class="coin ' + t[0] + '">' + t[1] + '</span>';
	}
	return '<button class="tab' + (i === 14 ? " active" : "") + '">' + mark + '<span class="tab-name">' + t[2] + '</span></button>';
}).join("");

function buttons(id, names, active) {
	document.getElementById(id).innerHTML = names.split(" ").map(function (n) {
		return '<button' + (n === active ? ' class="active"' : "") + '>' + n + '</button>';
	}).join("");
}
buttons("intervals", "5s 10s 15s 30s 45s 1m 2m 3m 4m 5m 7m 10m 15m 30m 45m 1h 2h 3h 4h 5h 10h 15h 24h T 2T 3T W 3W M 3M", "10m");
buttons("ranges", "1T 5T 1M 3M 6M YTD 1J 5J Alle");

// Drawing tools on the left; "-" is a separator
var tools = ["cross:active", "trend", "fib", "wave:WZ", "pos", "arrow", "text", "smile", "-", "ruler", "zoomin", "zoomout", "-",
	"magnet:on", "pencil", "lock", "eye", "link", "-", "trash", "star:on fav"];
function toolButton(t) {
	if (t === "-") return "<hr>";
	var p = t.split(":");
	var letters = p[1] && /^[A-Z]{2}$/.test(p[1]) ? '<span class="letters"><span>' + p[1][0] + '</span><span>' + p[1][1] + '</span></span>' : "";
	return '<button class="' + (letters ? "" : p[1] || "") + '" aria-label="' + p[0] + '">' + icon(p[0]) + letters + '</button>';
}
document.getElementById("drawtools").innerHTML = tools.map(toolButton).join("");

var favs = ["channel", "rect", "trend", "line", "hline", "pin", "bigarrow", "arrow", "text", "fan", "fibext", "fib", "range", "circle",
	"wave:AC", "wave:WZ", "wave:WY", "wave:AE", "cross:blue"];
document.getElementById("floating").innerHTML += favs.map(toolButton).join("");

document.getElementById("days").innerHTML = "Aug 4 5 6 7 8 11 12 13 14 15 18 19".split(" ").map(function (d) {
	return "<span>" + d + "</span>";
}).join("");

// Price scale, y in pane pixels
function priceY(p) {
	return Math.round(367 + (38.8 - p) * 309.1);
}
function label(y, text, cls) {
	return '<div class="price ' + cls + '" style="top:' + y + 'px">' + text + '</div>';
}
var hidden = ["38,60", "38,20", "38,00", "36,60"];
var axis = "";
for (var i = 0; i < 18; i++) {
	var p = 39.6 - i * 0.2;
	var txt = p.toFixed(2).replace(".", ",");
	if (hidden.indexOf(txt) < 0) axis += label(priceY(p), txt, "");
}
var tags = [
	[345, "38,88", "navy", "Hoch"], [422, "38,63", "last"], [524, "38,23", "plot-tag", "Gap:Plot"], [550, "38,22", "plot-tag", "Gap:Plot"],
	[615, "38,00", "grey"], [1038, "36,63", "pointer"], [1147, "36,28", "navy", "Tief"]
];
var names = "";
tags.forEach(function (t) {
	axis += label(t[0], t[1], t[2]);
	if (t[3]) names += '<div class="name ' + t[2] + '" style="top:' + t[0] + 'px">' + t[3] + '</div>';
});
document.getElementById("axis").insertAdjacentHTML("beforeend", axis);
document.getElementById("tags").innerHTML = names;

// Price path, x then y
var path = [85,960,88,980,92,977,95,1033,97,1050,101,1030,104,1053,107,1087,109,1140,111,1233,113,1167,117,1150,121,1127,124,1147,128,1190,
	133,1140,135,1147,138,1127,142,1140,145,1113,148,1117,153,1107,160,1107,168,1117,173,1163,176,1153,179,1133,185,1150,191,1127,195,1140,
	199,1193,202,1220,205,1190,208,1197,213,1183,217,1207,219,1200,220,1067,223,977,225,1073,228,1017,229,1070,233,1050,237,1090,242,1073,
	247,1063,252,1030,257,1017,262,1030,266,1023,267,1057,269,1070,271,1113,274,1083,277,1073,278,1030,282,1007,289,1000,293,977,298,963,
	303,930,306,917,309,967,312,990,316,973,318,937,321,977,323,933,327,913,330,903,332,943,336,917,342,940,347,927,356,907,362,913,367,903,
	373,897,380,903,387,920,390,930,393,900,397,930,400,905,404,893,409,893,412,930,414,915,416,932,418,915,421,870,424,880,427,860,429,800,
	430,765,433,790,438,795,443,776,447,770,450,782,455,790,460,795,465,788,470,790,475,778,482,785,487,778,491,795,495,775,500,772,503,780,
	506,797,511,800,515,790,518,775,521,790,523,832,526,790,528,760,532,745,536,755,541,765,546,748,551,757,558,756,
	559,752,565,734,571,738,575,706,580,709,586,688,592,670,598,656,601,606,604,670,608,620,613,591,616,527,619,520,622,577,628,563,631,620,
	636,641,642,649,645,656,650,684,654,656,656,599,660,577,662,534,666,502,670,534,674,549,678,581,684,595,688,584,693,577,697,566,700,538,
	703,484,707,499,710,545,713,552,715,588,720,602,724,574,728,563,732,538,735,556,739,574,745,563,749,620,753,581,756,591,759,570,764,595,
	769,609,772,649,776,634,781,684,785,666,790,666,794,677,798,641,802,681,804,759,805,809,808,752,812,731,818,756,823,791,827,791,832,752,
	837,784,844,784,850,781,854,802,860,827,865,856,869,831,873,806,877,784,883,781,886,759,894,759,898,752,900,766,904,766,907,799,911,795,
	917,806,922,827,925,806,930,799,934,841,937,831,939,727,944,727,950,741,955,766,959,756,965,745,971,749,976,770,978,741,981,688,985,674,
	990,670,998,659,1000,620,1003,602,1009,595,1013,563,1018,541];
// Long wicks: x, from, to
var spikes = [111,1233,1267,121,1077,1127,173,1163,1187,213,1183,1169,237,1090,1104,271,1100,1118,430,765,753,511,813,838,523,824,852,
	536,759,790,603,670,716,617,520,503,628,563,516,703,465,500,732,538,522,749,620,679,776,634,690,781,684,720,
	798,660,635,865,856,885,922,827,852,929,799,768,934,841,861,940,727,708,1017,541,528,167,1117,1101,191,1127,1111,257,1017,1003];

var seed = 7;
function rnd() {
	seed = (seed * 16807) % 2147483647;
	return seed / 2147483647;
}

function drawCandles() {
	var wick = "", rise = "", fall = "", k = 0, prev = path[1];
	for (var x = 85; x <= 1018; x++) {
		while (k < path.length - 4 && path[k + 2] < x) k += 2;
		var t = (x - path[k]) / (path[k + 2] - path[k]);
		var amp = x > 940 ? 8 : (x > 600 && x < 870) ? 20 : 12;
		var y = path[k + 1] + (path[k + 3] - path[k + 1]) * t;
		y = Math.round(y + (rnd() - 0.5) * amp * 1.4);
		var hi = Math.min(y, prev), lo = Math.max(y, prev);
		wick += "M" + (x + 0.5) + " " + Math.round(hi - rnd() * amp) + "V" + Math.round(lo + rnd() * amp);
		var seg = "M" + (x + 0.5) + " " + hi + "V" + (lo + 1);
		if (y < prev) rise += seg; else fall += seg;
		prev = y;
	}
	for (var s = 0; s < spikes.length; s += 3) {
		wick += "M" + (spikes[s] + 0.5) + " " + spikes[s + 1] + "V" + spikes[s + 2];
	}
	[["wick", wick], ["rise", rise], ["fall", fall]].forEach(function (c) {
		var el = document.createElementNS(NS, "path");
		el.setAttribute("class", c[0]);
		el.setAttribute("d", c[1]);
		document.getElementById("candles").appendChild(el);
	});
}
drawCandles();
```
